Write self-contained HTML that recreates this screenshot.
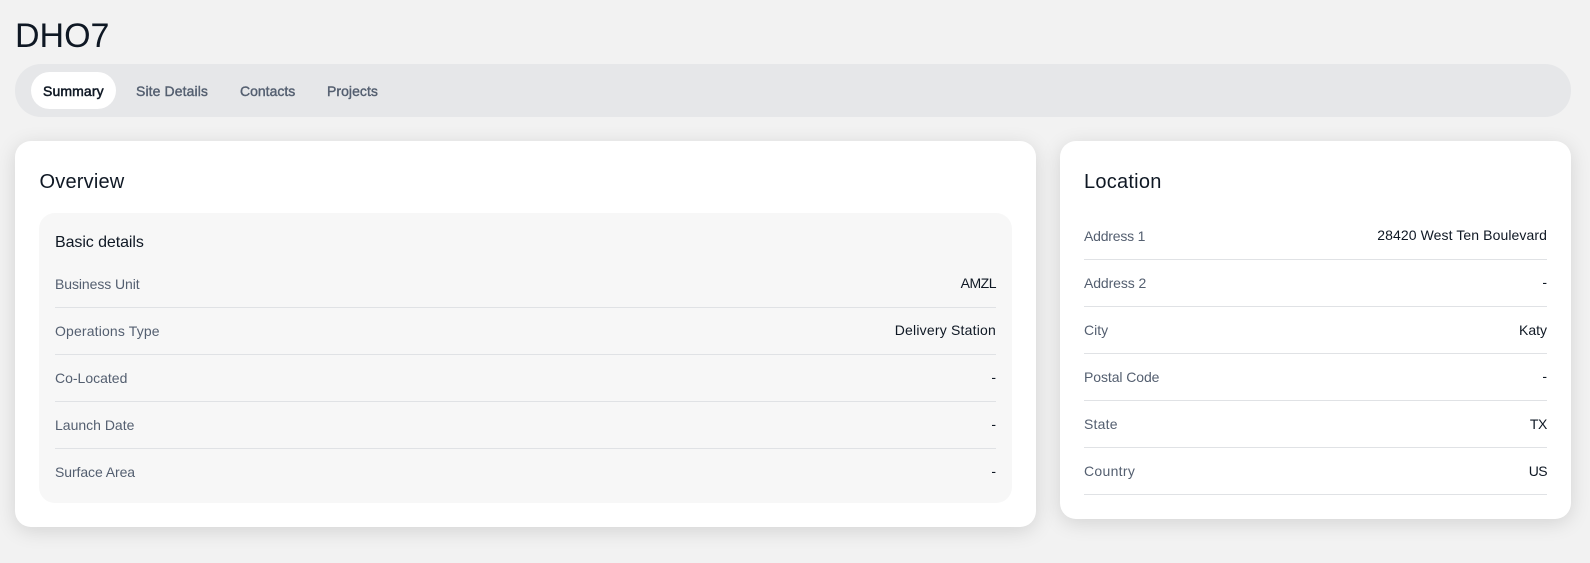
<!DOCTYPE html>
<html>
<head>
<meta charset="utf-8">
<style>
html,body{margin:0;padding:0;width:1590px;height:563px;overflow:hidden;background:#f2f2f2;font-family:"Liberation Sans",sans-serif;}
.a{position:absolute;white-space:nowrap;line-height:20px;}
.tab{font-size:14px;font-weight:400;color:#545f70;-webkit-text-stroke:.4px #545f70;top:81px;}
.card{position:absolute;background:#fff;border-radius:16px;box-shadow:0 4px 20px rgba(0,0,0,.13);}
.h{font-size:20px;color:#0f1824;line-height:24px;}
.l{font-size:14px;color:#545f70;}
.v{font-size:14px;color:#0f1824;text-align:right;}
.r{position:absolute;height:1px;background:#e0e2e5;}
</style>
</head>
<body>
<div class="a" style="left:15px;top:15px;font-size:34px;line-height:42px;color:#0f1824;">DHO7</div>

<div style="position:absolute;left:15px;top:64px;width:1556px;height:53px;background:#e6e7e9;border-radius:26px;"></div>
<div style="position:absolute;left:31px;top:72px;width:85px;height:37px;background:#fff;border-radius:19px;"></div>
<div class="a tab" style="left:43px;color:#0f1824;-webkit-text-stroke:.5px #0f1824;letter-spacing:.12px;">Summary</div>
<div class="a tab" style="left:136px;letter-spacing:.1px;">Site Details</div>
<div class="a tab" style="left:240px;">Contacts</div>
<div class="a tab" style="left:327px;letter-spacing:.05px;">Projects</div>

<div class="card" style="left:15px;top:141px;width:1021px;height:386px;"></div>
<div style="position:absolute;left:39px;top:213px;width:973px;height:290px;background:#f7f7f7;border-radius:16px;"></div>
<div class="a h" style="left:39.5px;top:170px;letter-spacing:.2px;">Overview</div>
<div class="a" style="left:55px;top:233px;font-size:16px;color:#0f1824;letter-spacing:-.08px;">Basic details</div>

<div class="a l" style="left:55px;top:274px;letter-spacing:-.08px;">Business Unit</div>
<div class="a v" style="right:594px;top:273px;letter-spacing:-.5px;">AMZL</div>
<div class="r" style="left:55px;top:307px;width:941px;"></div>
<div class="a l" style="left:55px;top:321px;letter-spacing:.15px;">Operations Type</div>
<div class="a v" style="right:594px;top:320px;letter-spacing:.2px;">Delivery Station</div>
<div class="r" style="left:55px;top:354px;width:941px;"></div>
<div class="a l" style="left:55px;top:368px;">Co-Located</div>
<div class="a v" style="right:594px;top:367px;">-</div>
<div class="r" style="left:55px;top:401px;width:941px;"></div>
<div class="a l" style="left:55px;top:415px;">Launch Date</div>
<div class="a v" style="right:594px;top:414px;">-</div>
<div class="r" style="left:55px;top:448px;width:941px;"></div>
<div class="a l" style="left:55px;top:462px;letter-spacing:-.08px;">Surface Area</div>
<div class="a v" style="right:594px;top:461px;">-</div>

<div class="card" style="left:1060px;top:141px;width:511px;height:378px;"></div>
<div class="a h" style="left:1084px;top:170px;letter-spacing:.25px;">Location</div>

<div class="a l" style="left:1084px;top:226px;letter-spacing:-.2px;">Address 1</div>
<div class="a v" style="right:43px;top:225px;letter-spacing:.09px;">28420 West Ten Boulevard</div>
<div class="r" style="left:1084px;top:259px;width:463px;"></div>
<div class="a l" style="left:1084px;top:273px;letter-spacing:-.1px;">Address 2</div>
<div class="a v" style="right:43px;top:272px;">-</div>
<div class="r" style="left:1084px;top:306px;width:463px;"></div>
<div class="a l" style="left:1084px;top:320px;">City</div>
<div class="a v" style="right:43px;top:320px;">Katy</div>
<div class="r" style="left:1084px;top:353px;width:463px;"></div>
<div class="a l" style="left:1084px;top:367px;letter-spacing:-.08px;">Postal Code</div>
<div class="a v" style="right:43px;top:366px;">-</div>
<div class="r" style="left:1084px;top:400px;width:463px;"></div>
<div class="a l" style="left:1084px;top:414px;letter-spacing:.2px;">State</div>
<div class="a v" style="right:43px;top:414px;letter-spacing:-.4px;">TX</div>
<div class="r" style="left:1084px;top:447px;width:463px;"></div>
<div class="a l" style="left:1084px;top:461px;letter-spacing:.3px;">Country</div>
<div class="a v" style="right:43px;top:461px;letter-spacing:-.6px;">US</div>
<div class="r" style="left:1084px;top:494px;width:463px;"></div>
</body>
</html>
